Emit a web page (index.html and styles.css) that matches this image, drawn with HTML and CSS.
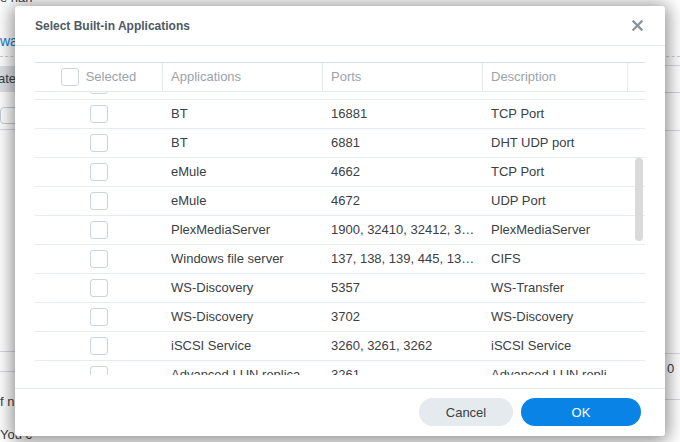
FILE: index.html
```html
<!DOCTYPE html>
<html lang="en">
<head>
<meta charset="utf-8">
<title>Select Built-in Applications</title>
<link rel="stylesheet" href="styles.css">
</head>
<body>
<div class="page">
  <div class="bg-left">
    <div class="frag-top">e han</div>
    <div class="frag-link">wal</div>
    <div class="frag-dash"></div>
    <div class="frag-btn">ate</div>
    <div class="frag-input"></div>
    <div class="frag-line l130"></div>
    <div class="frag-line l352"></div>
    <div class="frag-line l372"></div>
    <div class="frag-text t403">f n</div>
    <div class="frag-text t434">You c</div>
  </div>
  <div class="bg-right">
    <div class="frag-dash r56"></div>
    <div class="frag-line r65"></div>
    <div class="frag-line blue r92"></div>
    <div class="frag-line r130"></div>
    <div class="frag-line r353"></div>
    <div class="frag-text r368">0 i</div>
    <div class="frag-line r382"></div>
  </div>
</div>

<div class="dialog">
  <div class="dlg-header">
    <div class="dlg-title">Select Built-in Applications</div>
    <svg class="dlg-close" width="12" height="12" viewBox="0 0 12 12"><path d="M1.5 1.5 L10.5 10.5 M10.5 1.5 L1.5 10.5" stroke="#8a9299" stroke-width="2.4" stroke-linecap="square" fill="none"/></svg>
  </div>
  <div class="dlg-body">
    <div class="grid-head">
      <div class="hcell c-sel"><span class="cb"></span><span>Selected</span></div>
      <div class="hcell c-app">Applications</div>
      <div class="hcell c-port">Ports</div>
      <div class="hcell c-desc">Description</div>
      <div class="hcell c-rest"></div>
    </div>
    <div class="grid-view">
      <div class="grid-rows">
        <div class="row"><div class="cell c-sel"><span class="cb"></span></div><div class="cell c-app">Bonjour Service</div><div class="cell c-port">5353</div><div class="cell c-desc">Bonjour</div></div>
        <div class="row"><div class="cell c-sel"><span class="cb"></span></div><div class="cell c-app">BT</div><div class="cell c-port">16881</div><div class="cell c-desc">TCP Port</div></div>
        <div class="row"><div class="cell c-sel"><span class="cb"></span></div><div class="cell c-app">BT</div><div class="cell c-port">6881</div><div class="cell c-desc">DHT UDP port</div></div>
        <div class="row"><div class="cell c-sel"><span class="cb"></span></div><div class="cell c-app">eMule</div><div class="cell c-port">4662</div><div class="cell c-desc">TCP Port</div></div>
        <div class="row"><div class="cell c-sel"><span class="cb"></span></div><div class="cell c-app">eMule</div><div class="cell c-port">4672</div><div class="cell c-desc">UDP Port</div></div>
        <div class="row"><div class="cell c-sel"><span class="cb"></span></div><div class="cell c-app">PlexMediaServer</div><div class="cell c-port">1900, 32410, 32412, 32413, 32414, 32469</div><div class="cell c-desc">PlexMediaServer</div></div>
        <div class="row"><div class="cell c-sel"><span class="cb"></span></div><div class="cell c-app">Windows file server</div><div class="cell c-port">137, 138, 139, 445, 137, 138</div><div class="cell c-desc">CIFS</div></div>
        <div class="row"><div class="cell c-sel"><span class="cb"></span></div><div class="cell c-app">WS-Discovery</div><div class="cell c-port">5357</div><div class="cell c-desc">WS-Transfer</div></div>
        <div class="row"><div class="cell c-sel"><span class="cb"></span></div><div class="cell c-app">WS-Discovery</div><div class="cell c-port">3702</div><div class="cell c-desc">WS-Discovery</div></div>
        <div class="row"><div class="cell c-sel"><span class="cb"></span></div><div class="cell c-app">iSCSI Service</div><div class="cell c-port">3260, 3261, 3262</div><div class="cell c-desc">iSCSI Service</div></div>
        <div class="row"><div class="cell c-sel"><span class="cb"></span></div><div class="cell c-app">Advanced LUN replication</div><div class="cell c-port">3261</div><div class="cell c-desc">Advanced LUN replication</div></div>
        <div class="row"><div class="cell c-sel"><span class="cb"></span></div><div class="cell c-app">Active Backup</div><div class="cell c-port">5510</div><div class="cell c-desc">Active Backup</div></div>
      </div>
      <div class="scroll-thumb"></div>
    </div>
  </div>
  <div class="dlg-footer">
    <button class="btn btn-cancel">Cancel</button>
    <button class="btn btn-ok">OK</button>
  </div>
</div>
</body>
</html>
```
FILE: styles.css
```css
* { box-sizing: border-box; }
html, body { margin: 0; padding: 0; }
body {
  width: 680px;
  height: 442px;
  overflow: hidden;
  position: relative;
  background: #ffffff;
  font-family: "Liberation Sans", Arial, sans-serif;
  font-size: 13px;
  color: #3b4045;
}

/* background page fragments */
.page {
  display: flex;
  justify-content: space-between;
  height: 442px;
}
.bg-left { width: 60px; }
.bg-right { width: 30px; }

.frag-top { margin-top: -10px; line-height: 16px; color: #3b4045; }
.frag-link { margin-top: 27px; line-height: 16px; font-size: 14px; color: #0b7dd6; }
.frag-dash { margin-top: 7px; border-top: 1px dashed #c9cfd5; }
.frag-btn {
  margin-top: 9px; height: 26px; line-height: 26px;
  background: #dde2e7; color: #3b4045; text-indent: -2px;
}
.frag-input {
  margin-top: 15px; height: 17px;
  border: 1px solid #c6cdd4; border-radius: 4px;
}
.frag-line { border-top: 1px solid #d7dce1; }
.l130 { margin-top: 5px; }
.l352 { margin-top: 221px; }
.l372 { margin-top: 19px; }
.frag-text { line-height: 16px; color: #3b4045; }
.t403 { margin-top: 22px; }
.t434 { margin-top: 17px; }

.bg-right .r56 { margin-top: 56px; }
.r65 { margin-top: 8px; }
.r92 { margin-top: 26px; }
.frag-line.blue { border-top-color: #c9d6e2; }
.r130 { margin-top: 37px; }
.r353 { margin-top: 222px; }
.r368 { margin-top: 7px; text-indent: 17px; }
.r382 { margin-top: 6px; }

/* dialog */
.dialog {
  position: absolute;
  left: 15px;
  top: 6px;
  width: 650px;
  height: 430px;
  background: #ffffff;
  border-radius: 3px;
  box-shadow: 0 2px 18px 3px rgba(0, 0, 0, 0.45);
  display: flex;
  flex-direction: column;
}
.dlg-header {
  height: 40px;
  padding: 0 22px 0 20px;
  border-bottom: 1px solid #e4e9ee;
  display: flex;
  align-items: center;
  justify-content: space-between;
  flex: none;
}
.dlg-title {
  font-size: 12px;
  font-weight: bold;
  color: #4f5963;
}
.dlg-close { display: block; width: 11px; height: 11px; }

.dlg-body {
  flex: 1;
  padding: 16px 20px 0 20px;
}
.grid-head {
  display: flex;
  height: 30px;
  border-top: 1px solid #d6e0ea;
  border-bottom: 1px solid #e3e9ef;
  color: #9aa3ac;
}
.hcell {
  display: flex;
  align-items: center;
  padding: 0 8px 1px;
  border-right: 1px solid #e3e9ef;
  white-space: nowrap;
}
.hcell.c-sel { justify-content: center; gap: 7px; padding: 0 0 1px; }
.hcell.c-rest { border-right: none; }

.c-sel { width: 128px; flex: none; }
.c-app { width: 160px; flex: none; }
.c-port { width: 160px; flex: none; }
.c-desc { width: 145px; flex: none; }
.c-rest { flex: 1; }

.cb {
  display: inline-block;
  width: 18px;
  height: 18px;
  border: 1px solid #cbd3db;
  border-radius: 3px;
  background: #fff;
  flex: none;
}

.grid-view {
  position: relative;
  height: 283px;
  overflow: hidden;
}
.grid-rows { margin-top: -21px; }
.row {
  display: flex;
  height: 29px;
  border-bottom: 1px solid #e6ecf1;
}
.cell {
  display: flex;
  align-items: center;
  padding: 0 8px;
  white-space: nowrap;
  overflow: hidden;
}
.cell.c-sel { justify-content: center; padding: 0; }
.cell.c-port, .cell.c-desc, .cell.c-app {
  display: block;
  line-height: 28px;
  text-overflow: ellipsis;
}
.scroll-thumb {
  position: absolute;
  right: 2px;
  top: 66px;
  width: 8px;
  height: 83px;
  border-radius: 4px;
  background: #dadada;
}

.dlg-footer {
  flex: none;
  height: 48px;
  border-top: 1px solid #e4e9ee;
  display: flex;
  justify-content: flex-end;
  align-items: flex-start;
  gap: 8px;
  padding: 9px 24px 0 0;
}
.btn {
  height: 28px;
  border: none;
  border-radius: 14px;
  font-family: "Liberation Sans", Arial, sans-serif;
  font-size: 13px;
  padding: 0;
  cursor: pointer;
}
.btn-cancel { width: 94px; background: #e5eaef; color: #3b4045; }
.btn-ok { width: 120px; background: #0a83e6; color: #ffffff; }
```
